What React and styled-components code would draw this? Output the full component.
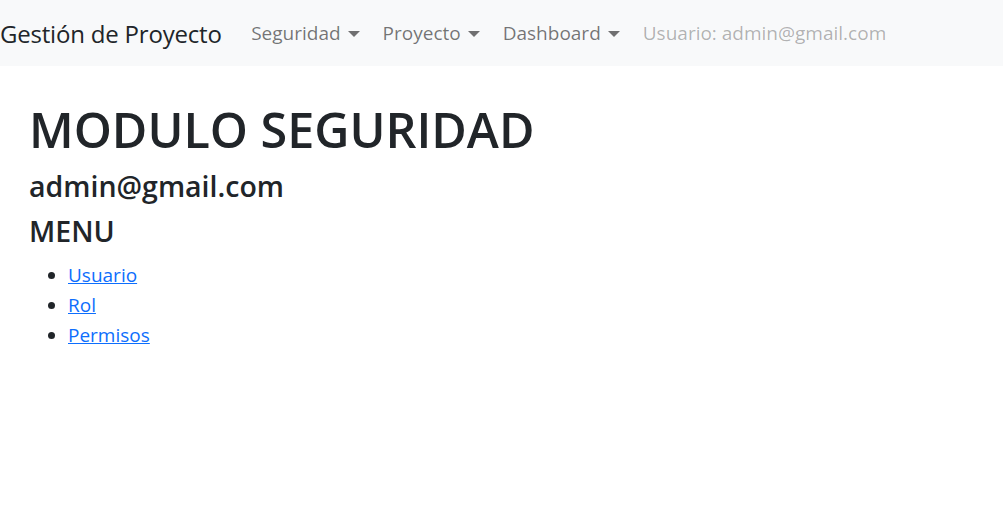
import React from 'react'
import styled, { createGlobalStyle } from 'styled-components'

const GlobalStyle = createGlobalStyle`
  body {
    margin: 0;
    font-family: 'Open Sans', 'Noto Sans', sans-serif;
    color: #212529;
    background: #fff;
  }
`

const navItems = ['Seguridad', 'Proyecto', 'Dashboard']
const menu = ['Usuario', 'Rol', 'Permisos']

const App = () => (
  <>
    <GlobalStyle />
    <Navbar>
      <Brand>Gestión de Proyecto</Brand>
      <Nav>
        {navItems.map(item => (
          <NavLink key={item} dropdown>
            {item}
          </NavLink>
        ))}
        <NavLink disabled>Usuario: admin@gmail.com</NavLink>
      </Nav>
    </Navbar>
    <Main>
      <Title>MODULO SEGURIDAD</Title>
      <Subtitle>admin@gmail.com</Subtitle>
      <Subtitle>MENU</Subtitle>
      <Menu>
        {menu.map(item => (
          <li key={item}>
            <MenuLink href="#">{item}</MenuLink>
          </li>
        ))}
      </Menu>
    </Main>
  </>
)

const Navbar = styled.nav`
  display: flex;
  align-items: center;
  height: 66px;
  background-color: #f8f9fa;
`

const Brand = styled.a`
  font-size: 24px;
  color: #212529;
  margin-right: 18px;
  letter-spacing: -0.2px;
  white-space: nowrap;
`

const Nav = styled.div`
  display: flex;
  align-items: center;
`

const NavLink = styled.a`
  display: flex;
  align-items: center;
  padding: 0 11.5px;
  font-size: 19px;
  color: ${props => (props.disabled ? 'rgba(0, 0, 0, 0.3)' : 'rgba(0, 0, 0, 0.55)')};
  white-space: nowrap;
  cursor: pointer;

  ${props =>
    props.dropdown &&
    `
    &::after {
      content: '';
      margin-left: 7px;
      margin-top: 2px;
      border-top: 6px solid;
      border-left: 6.5px solid transparent;
      border-right: 6.5px solid transparent;
    }
  `}
`

const Main = styled.main`
  padding: 34px 29px;
`

const Title = styled.h1`
  margin: 0 0 11px;
  font-size: 48.5px;
  font-weight: 600;
  line-height: 1.2;
`

const Subtitle = styled.h4`
  margin: 0 0 11px;
  font-size: 28.5px;
  font-weight: 600;
  line-height: 1.2;
`

const Menu = styled.ul`
  margin: 0;
  padding-left: 39px;
  font-size: 19px;
  line-height: 30px;
`

const MenuLink = styled.a`
  color: #0d6efd;
  text-decoration: underline;
`

export default App
